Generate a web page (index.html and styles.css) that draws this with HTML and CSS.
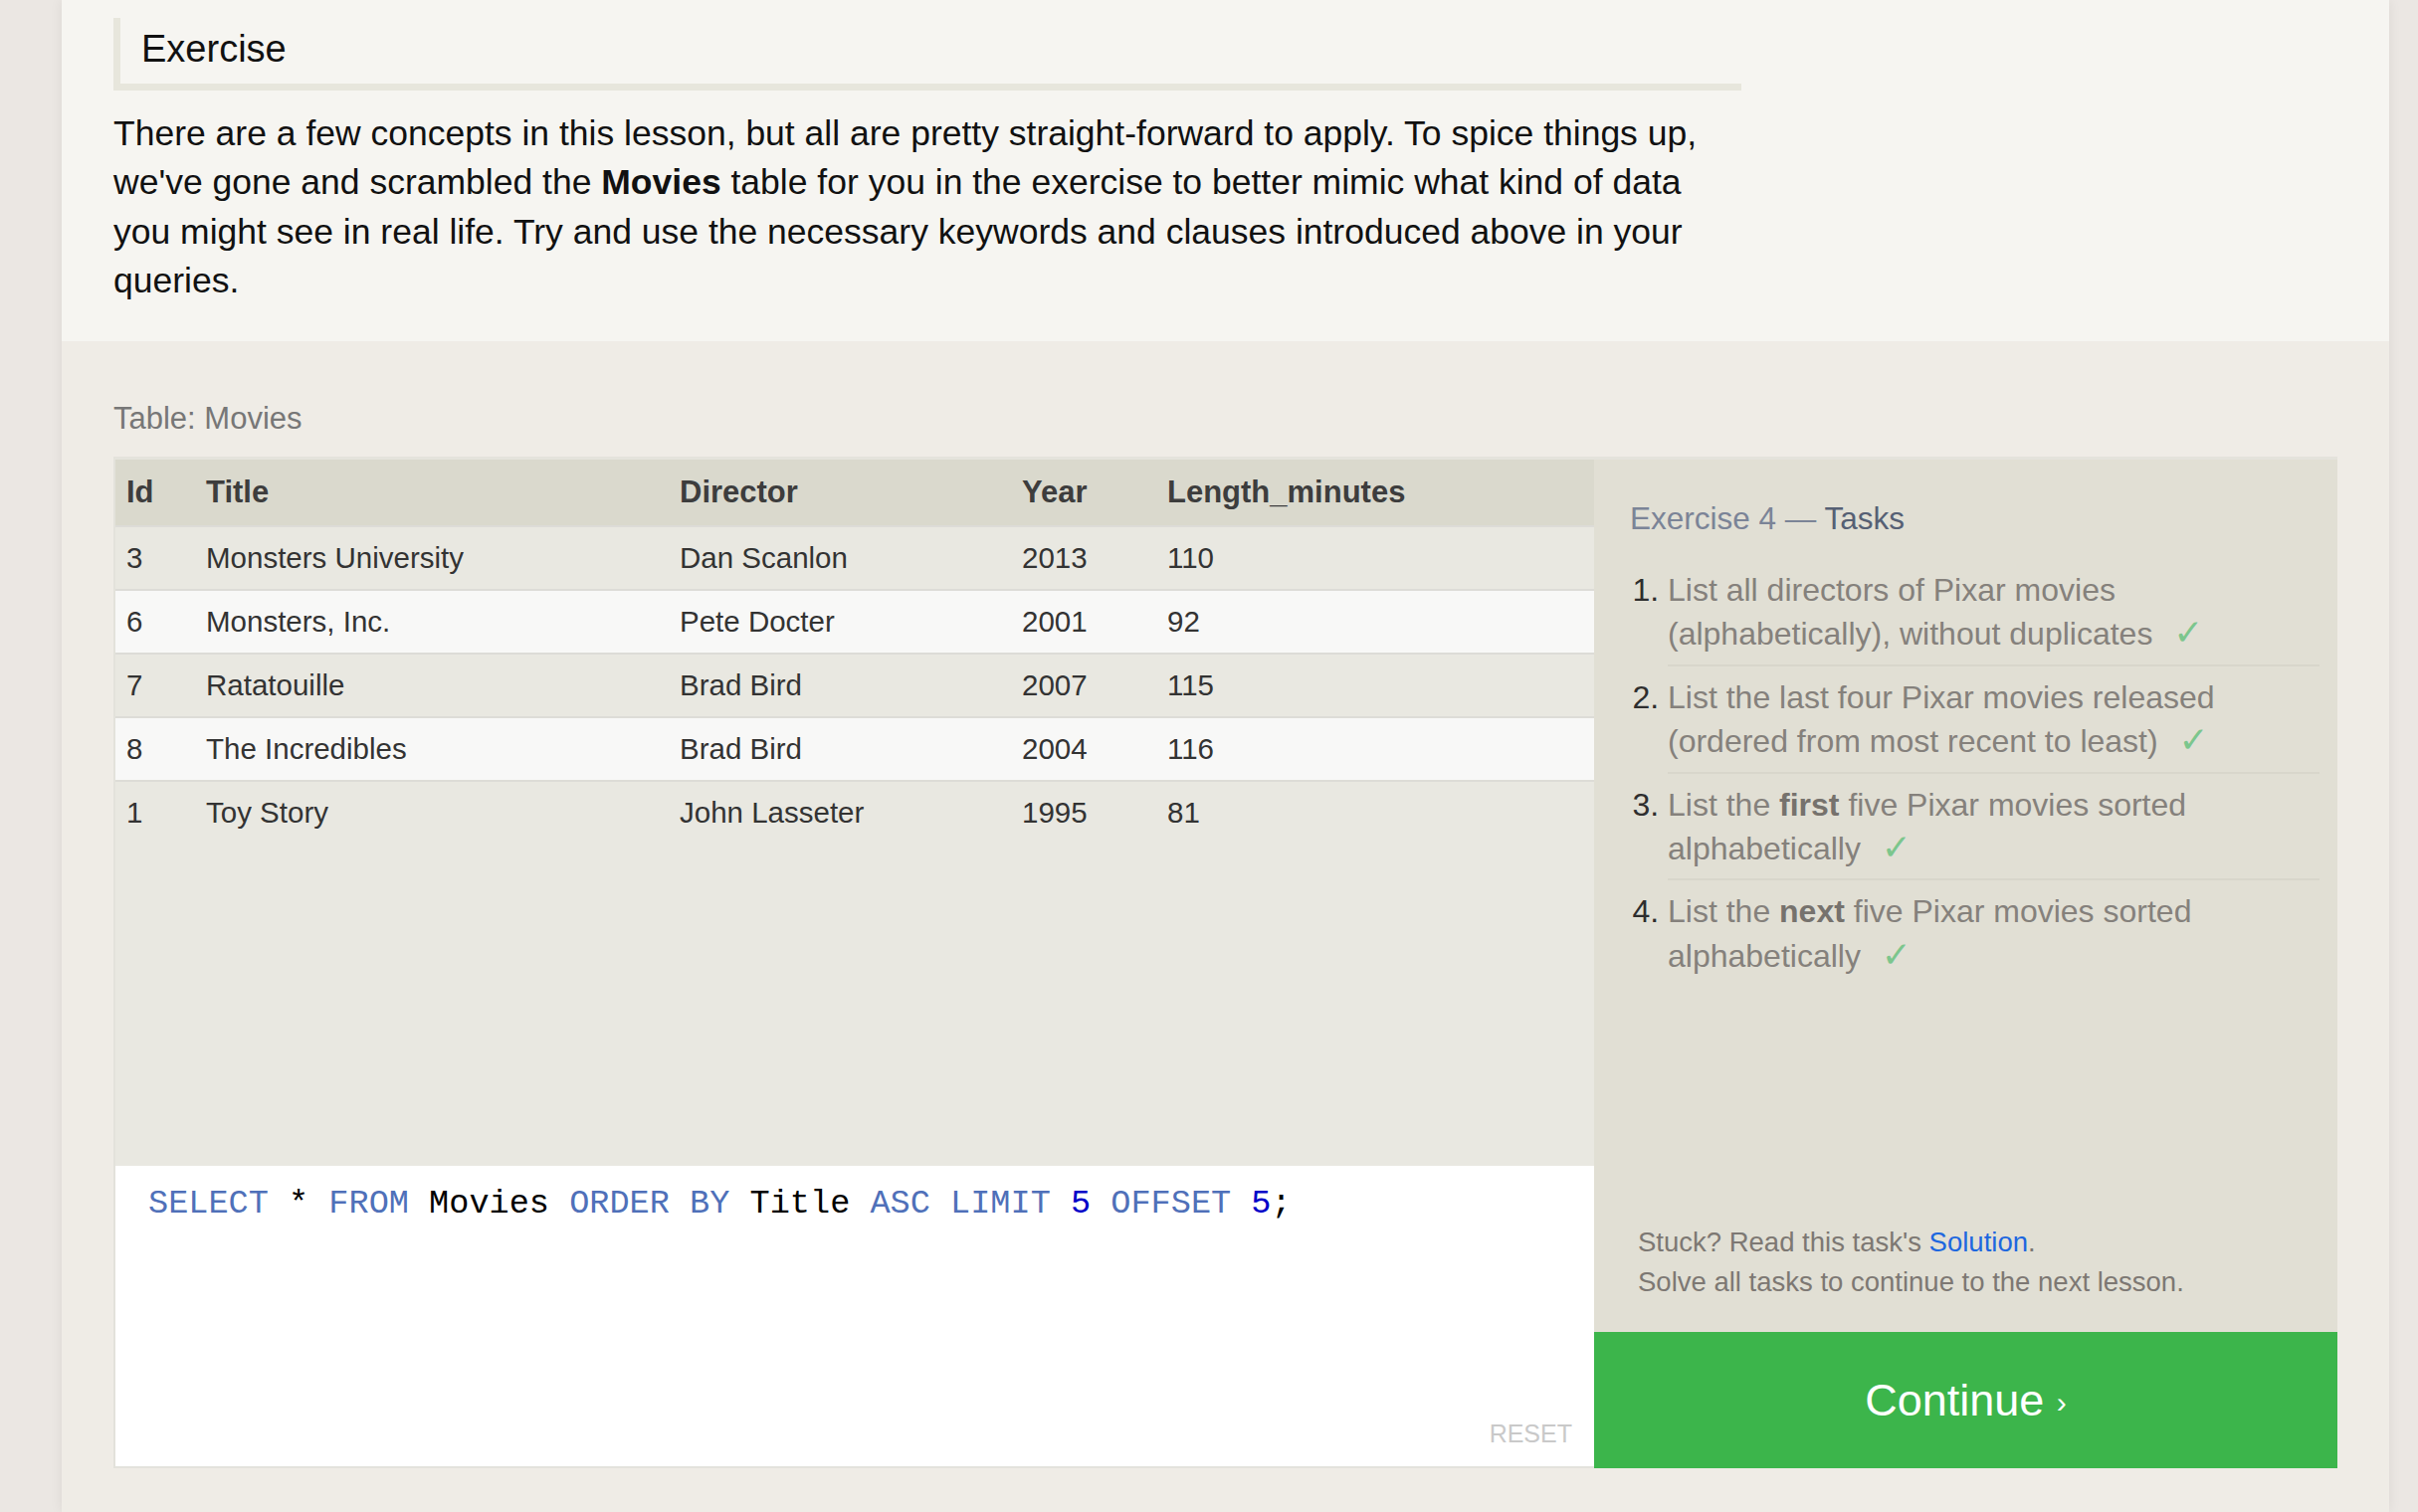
FILE: index.html
```html
<!DOCTYPE html>
<html lang="en">
<head>
<meta charset="utf-8">
<title>SQL Lesson – Exercise</title>
<link rel="stylesheet" href="styles.css">
</head>
<body>
<div class="page">
  <section class="intro">
    <h2 class="section-title">Exercise</h2>
    <p class="lead">There are a few concepts in this lesson, but all are pretty straight-forward to apply. To spice things up, we've gone and scrambled the <strong>Movies</strong> table for you in the exercise to better mimic what kind of data you might see in real life. Try and use the necessary keywords and clauses introduced above in your queries.</p>
  </section>

  <section class="exercise">
    <div class="table-label">Table: Movies</div>
    <div class="workspace">
      <div class="main-col">
        <div class="table-wrap">
          <table class="results">
            <colgroup>
              <col class="c-id"><col class="c-title"><col class="c-director"><col class="c-year"><col class="c-length">
            </colgroup>
            <thead>
              <tr><th>Id</th><th>Title</th><th>Director</th><th>Year</th><th>Length_minutes</th></tr>
            </thead>
            <tbody>
              <tr><td>3</td><td>Monsters University</td><td>Dan Scanlon</td><td>2013</td><td>110</td></tr>
              <tr><td>6</td><td>Monsters, Inc.</td><td>Pete Docter</td><td>2001</td><td>92</td></tr>
              <tr><td>7</td><td>Ratatouille</td><td>Brad Bird</td><td>2007</td><td>115</td></tr>
              <tr><td>8</td><td>The Incredibles</td><td>Brad Bird</td><td>2004</td><td>116</td></tr>
              <tr><td>1</td><td>Toy Story</td><td>John Lasseter</td><td>1995</td><td>81</td></tr>
            </tbody>
          </table>
        </div>
        <div class="editor">
          <pre class="code"><span class="kw">SELECT</span> * <span class="kw">FROM</span> Movies <span class="kw">ORDER BY</span> Title <span class="kw">ASC</span> <span class="kw">LIMIT</span> <span class="num">5</span> <span class="kw">OFFSET</span> <span class="num">5</span>;</pre>
          <div class="reset">RESET</div>
        </div>
      </div>

      <aside class="tasks-col">
        <div class="tasks">
          <h3 class="tasks-title"><span class="muted">Exercise 4 — </span>Tasks</h3>
          <ol class="task-list">
            <li>List all directors of Pixar movies (alphabetically), without duplicates <span class="check">✓</span></li>
            <li>List the last four Pixar movies released (ordered from most recent to least) <span class="check">✓</span></li>
            <li>List the <strong>first</strong> five Pixar movies sorted alphabetically <span class="check">✓</span></li>
            <li>List the <strong>next</strong> five Pixar movies sorted alphabetically <span class="check">✓</span></li>
          </ol>
          <div class="help">
            <div>Stuck? Read this task's <a class="link" href="#">Solution</a>.</div>
            <div>Solve all tasks to continue to the next lesson.</div>
          </div>
        </div>
        <a class="continue" href="#">Continue <span class="chev">›</span></a>
      </aside>
    </div>
  </section>
</div>
</body>
</html>
```

FILE: styles.css
```css
* { box-sizing: border-box; }

html, body {
  margin: 0;
  padding: 0;
}

body {
  background: #ebe7e3;
  font-family: "Liberation Sans", Arial, sans-serif;
  color: #111;
  overflow: hidden;
}

.page {
  width: 2339px;
  margin-left: 62px;
  box-shadow: 0 0 12px rgba(0, 0, 0, 0.07);
}

/* ---------- intro ---------- */
.intro {
  background: #f6f5f1;
  padding: 18px 52px 35px;
}

.section-title {
  width: 1636px;
  margin: 0;
  padding: 0 0 3px 21px;
  border-left: 7px solid #e7e6dc;
  border-bottom: 7px solid #e7e6dc;
  font-size: 38px;
  font-weight: normal;
  line-height: 63px;
  color: #111;
}

.lead {
  width: 1636px;
  margin: 18.6px 0 0;
  font-size: 35.5px;
  line-height: 49.6px;
  color: #111;
}

.lead strong { font-weight: bold; }

/* ---------- exercise ---------- */
.exercise {
  background: #efece6;
  padding: 58.5px 52px 44px;
}

.table-label {
  font-size: 31px;
  line-height: 40px;
  color: #777;
  margin-bottom: 17.5px;
}

.workspace {
  display: grid;
  grid-template-columns: 1488px 1fr;
  border-top: 3px solid #e4e3dc;
}

.main-col {
  display: flex;
  flex-direction: column;
  border-left: 2px solid #e3e2db;
}

.table-wrap {
  height: 710px;
  background: #e9e8e1;
}

.results {
  width: 100%;
  table-layout: fixed;
  border-collapse: separate;
  border-spacing: 0;
  color: #333;
}

.c-id { width: 80px; }
.c-title { width: 476px; }
.c-director { width: 344px; }
.c-year { width: 146px; }

.results th {
  background: #dad9cd;
  font-size: 31px;
  font-weight: bold;
  line-height: 66px;
  text-align: left;
  padding: 0 11px;
  color: #3d3d3d;
}

.results td {
  font-size: 29.5px;
  line-height: 62px;
  padding: 0 11px;
  border-top: 2px solid #dddcd7;
  white-space: nowrap;
}

.results tbody tr:nth-child(odd) td { background: #e9e8e1; }
.results tbody tr:nth-child(even) td { background: #f8f8f7; }

.editor {
  height: 304px;
  background: #fff;
  border-bottom: 2px solid #e3e2dc;
  display: flex;
  flex-direction: column;
  padding: 18px 22px 18px 33px;
}

.code {
  flex: 1;
  margin: 0;
  font-family: "Liberation Mono", "Courier New", monospace;
  font-size: 33.6px;
  line-height: 40px;
  color: #000;
}

.code .kw { color: #4f70b9; }
.code .num { color: #0000c8; }

.reset {
  align-self: flex-end;
  font-size: 25px;
  line-height: 30px;
  color: #c9c9c9;
}

/* ---------- tasks ---------- */
.tasks-col {
  display: flex;
  flex-direction: column;
}

.tasks {
  flex: 1;
  background: #e1dfd4;
  padding: 39px 18px 30px 36px;
  display: flex;
  flex-direction: column;
}

.tasks-title {
  margin: 0;
  font-size: 31.5px;
  font-weight: normal;
  line-height: 40px;
  color: #566074;
}

.tasks-title .muted { color: #7b8497; }

.task-list {
  margin: 21px 0 0;
  padding: 0 0 0 38px;
}

.task-list li {
  font-size: 32px;
  line-height: 44.4px;
  color: #85817c;
  padding: 9px 0 8px;
  border-bottom: 2px solid #d8d6cb;
}

.task-list li:last-child { border-bottom: none; }

.task-list li::marker { color: #2e2e2e; }

.task-list strong { color: #76726d; }

.check {
  margin-left: 12px;
  color: #7cc68d;
  font-family: "DejaVu Sans", sans-serif;
  font-size: 36px;
  line-height: 0;
}

.help {
  margin-top: auto;
  padding-left: 8px;
  font-size: 27.5px;
  line-height: 40px;
  color: #7d7873;
}

.link {
  color: #1d67df;
  text-decoration: none;
}

.continue {
  display: block;
  height: 137px;
  background: #3cb54b;
  color: #fff;
  text-decoration: none;
  text-align: center;
  font-size: 45px;
  line-height: 137px;
}

.chev {
  font-size: 30px;
  vertical-align: 3px;
}
```
